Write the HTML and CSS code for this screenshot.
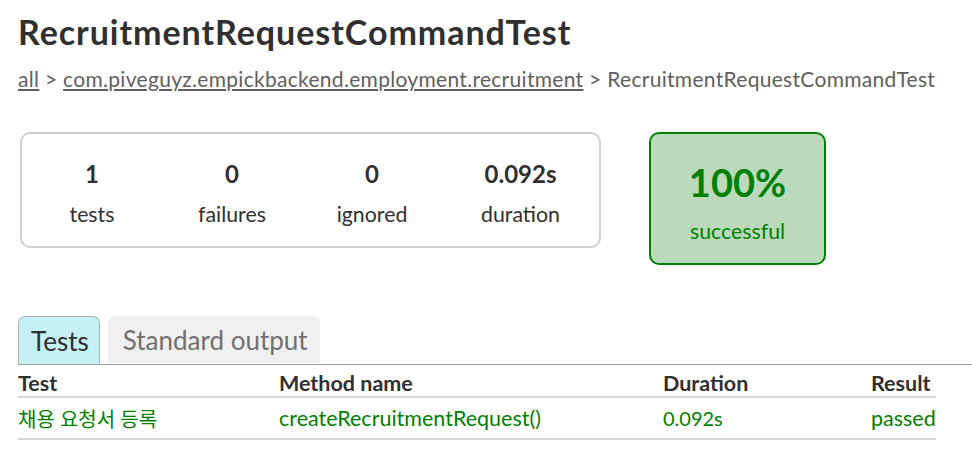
FILE: index.html
```html
<!DOCTYPE html>
<html lang="en">
<head>
<meta charset="utf-8">
<title>Test results - RecruitmentRequestCommandTest</title>
<link rel="stylesheet" href="styles.css">
</head>
<body>
<div class="content">
  <h1 class="title">RecruitmentRequestCommandTest</h1>
  <div class="breadcrumbs">
    <a href="#">all</a> &gt; <a href="#">com.piveguyz.empickbackend.employment.recruitment</a> &gt; RecruitmentRequestCommandTest
  </div>
  <div class="summary">
    <div class="summary-group">
      <div class="info-box">
        <div class="counter">1</div>
        <p>tests</p>
      </div>
      <div class="info-box">
        <div class="counter">0</div>
        <p>failures</p>
      </div>
      <div class="info-box">
        <div class="counter">0</div>
        <p>ignored</p>
      </div>
      <div class="info-box duration">
        <div class="counter">0.092s</div>
        <p>duration</p>
      </div>
    </div>
    <div class="success-rate">
      <div class="percent">100%</div>
      <p>successful</p>
    </div>
  </div>
  <ul class="tab-links">
    <li class="tab selected"><a href="#">Tests</a></li>
    <li class="tab"><a href="#">Standard output</a></li>
  </ul>
  <table class="results">
    <thead>
      <tr>
        <th>Test</th>
        <th>Method name</th>
        <th>Duration</th>
        <th>Result</th>
      </tr>
    </thead>
    <tbody>
      <tr class="success">
        <td class="ko">채용 요청서 등록</td>
        <td>createRecruitmentRequest()</td>
        <td class="num">0.092s</td>
        <td>passed</td>
      </tr>
    </tbody>
  </table>
</div>
</body>
</html>
```

FILE: styles.css
```css
html, body {
  margin: 0;
  padding: 0;
  background: #ffffff;
}

body {
  font-family: "Lato", "Noto Sans CJK KR", sans-serif;
  font-size: 20px;
  color: #303030;
}

.content {
  padding: 14px 0 0 18px;
}

.title {
  margin: 0;
  font-size: 34px;
  font-weight: 700;
  letter-spacing: 0.95px;
  line-height: 36px;
  white-space: nowrap;
}

.breadcrumbs {
  margin-top: 15px;
  color: #606060;
  font-size: 21px;
  letter-spacing: 0.3px;
  line-height: 28px;
  white-space: nowrap;
}

.breadcrumbs a {
  color: #606060;
}

.summary {
  display: flex;
  align-items: flex-start;
  margin-top: 39px;
  margin-left: 2px;
}

.summary-group {
  display: flex;
  border: 2px solid #d0d0d0;
  border-radius: 10px;
  height: 112px;
  box-sizing: content-box;
}

.info-box {
  width: 140px;
  text-align: center;
  padding-top: 26px;
}

.info-box.duration {
  width: 157px;
}

.info-box p {
  margin: 0;
  font-size: 21.3px;
  line-height: 28px;
}

.counter {
  font-weight: 700;
  font-size: 24px;
  line-height: 28px;
  margin-bottom: 12px;
}

.success-rate {
  margin-left: 48px;
  width: 177px;
  height: 133px;
  border: 2px solid #008000;
  border-radius: 10px;
  background: #bbd9bb;
  color: #008000;
  text-align: center;
  box-sizing: border-box;
  padding-top: 26px;
}

.success-rate p {
  margin: 0;
  font-size: 21.3px;
  line-height: 28px;
}

.percent {
  font-size: 38px;
  font-weight: 700;
  line-height: 44px;
  margin-bottom: 13px;
}

.tab-links {
  display: flex;
  gap: 8px;
  list-style: none;
  margin: 51px 0 0 0;
  padding: 0;
  border-bottom: 1px solid #a0a0a0;
}

.tab {
  border-radius: 7px 7px 0 0;
  background: #f0f0f0;
  padding: 0 12px 0 15px;
  height: 47px;
  display: flex;
  align-items: center;
}

.tab.selected {
  background: #c5f0f5;
  border: 1px solid #a8b4b6;
  border-bottom: none;
  padding: 0 10px 0 12px;
}

.tab a {
  font-size: 26px;
  text-decoration: none;
  color: #707070;
}

.tab.selected a {
  color: #303030;
}

.results {
  border-collapse: collapse;
  width: 918px;
}

.results th {
  text-align: left;
  font-weight: 700;
  font-size: 21.5px;
  white-space: nowrap;
  padding: 4px 0 0 0;
  height: 27px;
  border-bottom: 2px solid #d8d8d8;
}

.results td {
  white-space: nowrap;
  padding: 0;
  font-size: 21.5px;
  height: 40px;
  border-bottom: 2px solid #d8d8d8;
}

.results td.ko {
  font-size: 20px;
}

.results td.num {
  font-size: 20px;
}

.results th:nth-child(1), .results td:nth-child(1) { width: 261px; }
.results th:nth-child(2), .results td:nth-child(2) { width: 384px; }
.results th:nth-child(3), .results td:nth-child(3) { width: 208px; }

.results tr.success td {
  color: #008000;
}
```
